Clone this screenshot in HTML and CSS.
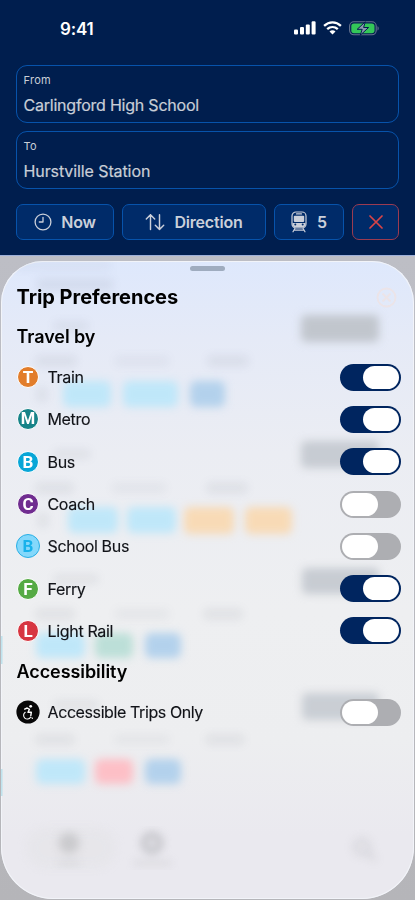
FILE: index.html
```html
<!DOCTYPE html>
<html lang="en">
<head>
<meta charset="utf-8">
<meta name="viewport" content="width=device-width, initial-scale=1">
<title>Trip Preferences</title>
<link rel="stylesheet" href="styles.css">
</head>
<body>
<div class="phone">
  <header class="planner">
    <div class="status">
      <span class="time">9:41</span>
      <div class="indicators">
        <svg width="22" height="14" viewBox="0 0 22 14" fill="#fff"><rect x="0" y="8.6" width="4" height="5" rx="1.1"/><rect x="6" y="6" width="4" height="7.6" rx="1.1"/><rect x="11.8" y="3.4" width="4" height="10.2" rx="1.1"/><rect x="17.6" y="0.3" width="4" height="13.3" rx="1.1"/></svg>
        <svg width="19" height="14" viewBox="0 0 19 14" fill="none" stroke="#fff" stroke-width="2.3"><path d="M1.1 4.9C6 .2 13 .2 17.900 4.9"/><path d="M4.2 8.2C7.300 5.300 11.700 5.300 14.800 8.200"/><path d="M9.500 13.600 6.500 10.500C8.200 8.900 10.800 8.900 12.500 10.500Z" fill="#fff" stroke="none"/></svg>
        <svg width="31" height="15" viewBox="0 0 31 15"><rect x=".6" y=".8" width="26.600" height="13" rx="4.300" fill="none" stroke="#65728f" stroke-width="1.100"/><path d="M28.500 5.200c1.600.5 1.600 3.700 0 4.200z" fill="#65728f"/><rect x="2.300" y="2.400" width="23.200" height="9.800" rx="2.700" fill="#34c759"/><path d="M16.300.8 8.200 8.300h5l-2 6 8.400-7.800h-5z" fill="#8b98ae" stroke="#001e4e" stroke-width="1"/></svg>
      </div>
    </div>
    <div class="fields">
      <div class="field"><span class="label">From</span><span class="value from">Carlingford High School</span></div>
      <div class="field"><span class="label">To</span><span class="value to">Hurstville Station</span></div>
    </div>
    <div class="actions">
      <button class="action now"><svg width="18" height="18" viewBox="0 0 18 18" fill="none" stroke="currentColor" stroke-width="1.300" stroke-linecap="round" stroke-linejoin="round"><circle cx="9" cy="9" r="7.900"/><path d="M9 4.300V9H5.300"/></svg><span>Now</span></button>
      <button class="action direction"><svg width="20" height="18" viewBox="0 0 20 18" fill="none" stroke="currentColor" stroke-width="1.450" stroke-linecap="round" stroke-linejoin="round"><path d="M5.500 16.500V1.700M1.300 6l4.200-4.300L9.700 6M14.500 1.700v14.800M10.300 12.300l4.200 4.200 4.200-4.200"/></svg><span>Direction</span></button>
      <button class="action modes"><svg width="16" height="22" viewBox="0 0 16 22" fill="none" stroke="currentColor" stroke-width="1.200" stroke-linecap="round"><rect x="1" y="1" width="14" height="16" rx="4"/><path d="M5.500 2.900h5"/><rect x="2.800" y="4.700" width="10.400" height="6.300" rx="1" fill="currentColor" stroke="none"/><path d="M1.500 12h13v2q-1 2.500-3 2.500h-7q-2 0-3-2.500z" fill="currentColor" stroke="none"/><g fill="#002b69" stroke="none"><circle cx="4.300" cy="13.500" r="1"/><circle cx="11.700" cy="13.500" r="1"/></g><path d="M3.900 17.500 2 20.800M12.100 17.500l1.900 3.300M3.200 19.200h9.600"/></svg><span>5</span></button>
      <button class="action close" aria-label="Clear"><svg width="14" height="14" viewBox="0 0 14 14" fill="none" stroke="currentColor" stroke-width="1.700" stroke-linecap="round"><path d="M1 1l12 12M13 1 1 13"/></svg></button>
    </div>
  </header>

  <main class="results">
    <section class="sheet">
      <svg class="backdrop" width="413" height="638" viewBox="1 261 413 638" aria-hidden="true">
        <defs>
          <filter id="soft" x="-20%" y="-20%" width="140%" height="140%"><feGaussianBlur stdDeviation="4.300"/></filter>
          <filter id="haze" x="-20%" y="-20%" width="140%" height="140%"><feGaussianBlur stdDeviation="5"/></filter>
        </defs>
        <g filter="url(#haze)" fill="#687080" opacity=".11">
          <rect x="15" y="263" width="96" height="5"/><rect x="37" y="279" width="76" height="11"/>
          <rect x="54" y="322" width="34" height="8"/><rect x="54" y="450" width="36" height="8"/><rect x="54" y="575" width="44" height="8"/><rect x="54" y="701" width="44" height="7"/>
          <rect x="36" y="356" width="40" height="10"/><rect x="115" y="356" width="54" height="10" opacity=".6"/><rect x="208" y="356" width="40" height="10"/>
          <rect x="36" y="483" width="37" height="10"/><rect x="112" y="483" width="54" height="10" opacity=".6"/><rect x="207" y="483" width="40" height="10"/>
          <rect x="36" y="609" width="38" height="10"/><rect x="115" y="609" width="54" height="10" opacity=".6"/><rect x="204" y="609" width="38" height="10"/>
          <rect x="36" y="735" width="38" height="9"/><rect x="115" y="735" width="54" height="9" opacity=".6"/><rect x="206" y="735" width="38" height="9"/>
          <rect x="37" y="388" width="10" height="13"/><rect x="38" y="514" width="10" height="13"/>
        </g>
        <g filter="url(#soft)">
          <g fill="#c1c6cd"><rect x="301" y="315" width="78" height="27" rx="5"/><rect x="301" y="441" width="78" height="27" rx="5" opacity=".85"/><rect x="302" y="568" width="77" height="26" rx="5" opacity=".85"/><rect x="302" y="693" width="77" height="27" rx="5" opacity=".8"/></g>
          <g fill="#bfe7f9"><rect x="63" y="381" width="48" height="26" rx="6"/><rect x="123" y="381" width="55" height="26" rx="6"/><rect x="68" y="507" width="50" height="26" rx="6"/><rect x="127" y="507" width="49" height="26" rx="6"/><rect x="36" y="633" width="49" height="25" rx="6"/><rect x="36" y="759" width="49" height="25" rx="6"/></g>
          <g fill="#b3d1ec"><rect x="190" y="381" width="35" height="26" rx="6"/><rect x="145" y="633" width="36" height="25" rx="6"/><rect x="145" y="759" width="36" height="25" rx="6"/></g>
          <g fill="#f8dab6"><rect x="184" y="507" width="50" height="27" rx="6"/><rect x="245" y="507" width="47" height="27" rx="6"/></g>
          <rect x="95" y="633" width="38" height="25" rx="6" fill="#bcdfd8"/>
          <rect x="95" y="759" width="38" height="25" rx="6" fill="#fdbfc6"/>
        </g>
        <path d="M1 636h1.500v28H1zM1 769h1.500v27H1z" fill="#a9dcea" opacity=".7"/>
        <rect x="27" y="828" width="88" height="40" rx="20" fill="#e3e3e6" opacity=".5" filter="url(#haze)"/>
        <g filter="url(#soft)" opacity=".62"><circle cx="69" cy="843" r="10.500" fill="#b9babc"/><circle cx="152" cy="843" r="8" fill="none" stroke="#a7a8ad" stroke-width="6"/><circle cx="362" cy="847" r="7" fill="none" stroke="#c2c2c8" stroke-width="3.500"/><path d="m367 852 8 8" stroke="#c2c2c8" stroke-width="3.500"/><path d="M59 863h20M134 863h37" stroke="#cacace" stroke-width="4"/></g>
        <g fill="none" stroke="#f0e2e1" stroke-width="1.800" opacity=".72"><circle cx="386.500" cy="297.500" r="9"/><path d="m382.500 293.500 8 8m0-8-8 8"/></g>
      </svg>
      <div class="content">
        <div class="grabber"></div>
        <h1>Trip Preferences</h1>
        <h2 class="travel">Travel by</h2>
        <div class="rows">
          <label class="row"><span class="badge train">T</span><span class="name">Train</span><span class="switch on"></span></label>
          <label class="row"><span class="badge metro">M</span><span class="name">Metro</span><span class="switch on"></span></label>
          <label class="row"><span class="badge bus">B</span><span class="name">Bus</span><span class="switch on"></span></label>
          <label class="row"><span class="badge coach">C</span><span class="name">Coach</span><span class="switch"></span></label>
          <label class="row"><span class="badge school">B</span><span class="name">School Bus</span><span class="switch"></span></label>
          <label class="row"><span class="badge ferry">F</span><span class="name">Ferry</span><span class="switch on"></span></label>
          <label class="row"><span class="badge light">L</span><span class="name">Light Rail</span><span class="switch on"></span></label>
        </div>
        <h2 class="access">Accessibility</h2>
        <label class="row"><svg class="wheelchair" width="24" height="24" viewBox="0 0 24 24"><circle cx="12" cy="12" r="11.600" fill="#080808"/><circle cx="14.700" cy="6.300" r="1.400" fill="#fff"/><g fill="none" stroke="#fff" stroke-linecap="round" stroke-linejoin="round"><path d="m8.700 9.100 2.500-1.100 2.300 1.300-1.500 3h3.300l-.5 3.300" stroke-width="1.400"/><path d="M9.200 12.300a3.700 3.700 0 1 0 5.300 4.900" stroke-width="1.100"/><path d="m15.900 17.700.5.800" stroke-width="1.100"/></g></svg><span class="name trips">Accessible Trips Only</span><span class="switch"></span></label>
      </div>
    </section>
  </main>
</div>
</body>
</html>
```

FILE: styles.css
```css
* { box-sizing: border-box; }
body { margin: 0; font-family: Inter, "Liberation Sans", sans-serif; }
.phone { width: 415px; height: 900px; overflow: hidden; display: flex; flex-direction: column; }

.planner { height: 255px; padding: 0 16px; background: #001e4e; color: #c9ced7; flex: none; }
.status { height: 65px; display: flex; justify-content: space-between; align-items: flex-start; padding: 20px 19px 0 44px; color: #fff; }
.time { font-size: 17px; line-height: 18px; font-weight: 600; letter-spacing: -.2px; }
.indicators { display: flex; gap: 7px; align-items: center; height: 16px; }
.fields { display: grid; gap: 8px; }
.field { height: 58px; border: 1px solid #0753ab; border-radius: 11px; padding: 7px 6.500px 0; display: flex; flex-direction: column; }
.label { font-size: 11px; line-height: 15px; letter-spacing: .25px; }
.value { font-size: 16px; line-height: 20px; margin-top: 7px; letter-spacing: -.22px; -webkit-text-stroke: .2px currentColor; }
.to { letter-spacing: -.1px; }
.actions { display: flex; gap: 8px; margin-top: 15px; }
.action { height: 36px; border: 1px solid #0753ab; border-radius: 7px; background: #002b69; color: #cbd0da; display: flex; align-items: center; justify-content: center; padding: 0; font: 600 16px/20px Inter, sans-serif; letter-spacing: -.2px; }
.action svg { flex: none; }
.now { width: 98px; gap: 9px; }
.direction { width: 144px; gap: 9px; }
.modes { width: 70px; gap: 10px; }
.close { width: 47px; border-color: #9b3b51; color: #d94447; }

.results { height: 645px; padding: 5px 1px 1px; background: linear-gradient(#bdbec5, #b5b5b9); border-top: 1px solid #9dafd8; }
.sheet { position: relative; height: 638px; border-radius: 42px 42px 52px 52px; overflow: hidden; background: linear-gradient(#dee8fc, #e5eaf7 12%, #ebedf3 30%, #eeeff1 55%, #edeef0 75%, #eae9ef 90%); box-shadow: inset 0 0 0 1px #f2f4f9; }
.backdrop { position: absolute; inset: 0; }
.content { position: relative; padding: 5px 13px 0 15px; }
.grabber { width: 35px; height: 5px; border-radius: 3px; background: #9facbf; margin: 0 auto; transform: translateX(-1px); }
h1, h2 { margin: 0; color: #000; padding-left: .5px; }
h1 { font-size: 20px; line-height: 24px; font-weight: 700; margin-top: 14px; letter-spacing: -.03px; }
h2 { font-size: 18px; line-height: 22px; font-weight: 600; letter-spacing: -.07px; }
.travel { margin-top: 17px; }
.rows { margin-top: 8px; }
.row { height: 42.300px; display: flex; align-items: center; }
.badge { width: 22px; height: 22px; margin-left: 1px; border: 1.500px solid #fff; border-radius: 50%; color: #fff; font: 700 17px/20px Roboto, sans-serif; text-align: center; flex: none; }
.train { background: #e27d2b; }
.metro { background: #168388; font-size: 16.500px; }
.bus { background: #08a6d7; }
.coach { background: #702d90; }
.school { width: 24px; height: 24px; margin-left: 0; border-color: #29aee4; background: #84d8fb; color: #18b2eb; line-height: 22px; }
.ferry { background: #55aa44; }
.light { background: #d73641; }
.name { margin-left: 8.500px; font-size: 16px; line-height: 20px; color: #111318; letter-spacing: -.33px; -webkit-text-stroke: .15px currentColor; }
.school + .name, .wheelchair + .name { margin-left: 7.500px; }
.trips { letter-spacing: -.4px; }
.switch { margin-left: auto; width: 61px; height: 27px; padding: 2px; border-radius: 14px; background: #adaeb2; display: flex; }
.switch::after { content: ""; width: 36px; height: 23px; border-radius: 12px; background: #fff; }
.on { background: #00255f; justify-content: flex-end; }
.access { margin-top: 9px; margin-bottom: 8px; }
.wheelchair { flex: none; }
```
